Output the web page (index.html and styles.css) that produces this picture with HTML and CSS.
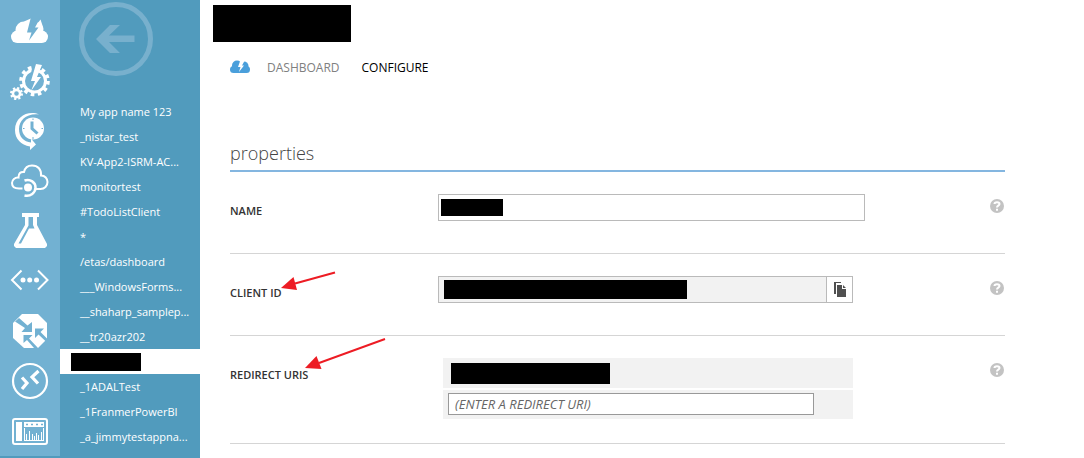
FILE: index.html
```html
<!DOCTYPE html>
<html lang="en">
<head>
<meta charset="utf-8">
<meta name="viewport" content="width=device-width, initial-scale=1">
<title>Configure</title>
<link rel="stylesheet" href="styles.css">
</head>
<body>
<div class="shell">
  <nav class="rail" aria-label="Services">
    <button class="rail-item" type="button" aria-label="Cloud services"><svg viewBox="0 0 60 50"><g class="w"><circle cx="17.200" cy="30.800" r="6.200"/><circle cx="24" cy="24" r="8.500"/><circle cx="36.500" cy="23" r="7"/><circle cx="41.800" cy="30.800" r="6.200"/><path d="M17 27h25v10H17zM24 15.500L32 12v12z"/></g><path class="b" d="M31 11L27 26.500h4.500L29 34.500 38.500 21.500H35L38 16l3-5z"/><path class="w" d="M40.500 13.500l2 6-5-2z"/></svg></button>
    <button class="rail-item" type="button" aria-label="Automation"><svg viewBox="0 0 60 50"><circle class="s" cx="34.500" cy="25" r="11" stroke-width="3"/><circle class="s" cx="34.500" cy="25" r="13.500" stroke-width="3.600" stroke-dasharray="3.600 3.469"/><path class="b" d="M33 8l-4 18h4l9-17z"/><path class="w" d="M36 8l-5 17h4l-4 10 10-14h-4l5-12z"/><circle class="s" cx="16.500" cy="37.500" r="3.600" stroke-width="2.600"/><circle class="s" cx="16.500" cy="37.500" r="5.500" stroke-width="2" stroke-dasharray="2.200 2.120"/></svg></button>
    <button class="rail-item" type="button" aria-label="Scheduler"><svg viewBox="0 0 60 50"><circle class="w" cx="33" cy="22.500" r="11"/><path class="sb" d="M32 15.500v7l5.500 5" stroke-width="3"/><path class="sb" d="M33 12.500v1.500M33 31v2M23 22.500h1.500M41.500 22.500H43" stroke-width="1"/><path class="w" d="M39 8.500C29 4 15 10 15 24c0 9 6 15 15 16.500V44l6-5.500-5-6v4C24 36 19 31 19 23c0-9 8-16 20-14.500z"/></svg></button>
    <button class="rail-item" type="button" aria-label="API management"><svg viewBox="0 0 60 50"><path class="s" d="M22.500 32.500H19c-5 0-7-2.500-7-5.500s3-6 6.500-5.500c0-4 2-6 5.500-5.500 1-4.500 4-6.500 8-6.500 6 0 9.500 4 9 10 4 0 6.500 3 6.500 6.500 0 4-3 7-7 7h-5" stroke-width="2"/><circle class="w" cx="28" cy="31.500" r="4"/><path class="s" d="M24.500 24.500c6-2 11 2 11 7s-5 9.500-11 8" stroke-width="2.500"/></svg></button>
    <button class="rail-item" type="button" aria-label="Machine learning"><svg viewBox="0 0 60 50"><path class="w" d="M22 7h17v4h-2v8l10 19v2l-2 2H16l-2-2v-2l11-19v-8h-3z"/><path class="b" d="M28.500 11h4.500v8l1.500 3.500h-5.500L21 37.500h-2.500l10-18z"/></svg></button>
    <button class="rail-item" type="button" aria-label="Virtual networks"><svg viewBox="0 0 60 50"><path class="s" d="M21.500 14.500L12 24l9.500 9.500M38 14.500l9.500 9.500-9.500 9.500" stroke-width="2"/><g class="w"><circle cx="23" cy="24" r="2.500"/><circle cx="29.700" cy="24" r="2.500"/><circle cx="36.500" cy="24" r="2.500"/></g></svg></button>
    <button class="rail-item" type="button" aria-label="Traffic manager"><svg viewBox="0 0 60 50"><path class="w" d="M22 8h16l9 9v16l-9 9H24l-11-10V17z"/><path class="b" d="M15 15.500l4-3.500 8.500 7.500 4.500-3.500V26H21.500l3.500-4zM23.500 29h9l-3.500 3.500 9 9.500h-4l-7-8-3.500 3zM35 22.500h9l-3.500 3.500 6.500 6.500v4L38.500 28.500 35 32z"/></svg></button>
    <button class="rail-item" type="button" aria-label="Remote app"><svg viewBox="0 0 60 50"><circle class="s" cx="30" cy="25" r="17" stroke-width="2.200"/><path class="s" d="M22 21.500l5 5.500-5 6M38.500 15L32 21l6 6.500" stroke-width="3.200"/></svg></button>
    <button class="rail-item" type="button" aria-label="Media services"><svg viewBox="0 0 60 50"><rect class="s" x="13" y="13" width="34" height="25" rx="2" stroke-width="2"/><path class="w" d="M16 16h6v19h-6zM24 16h20v5H24zM24 35V22h1v13zM26 35v-7h1v7zM29 35V25h1v10zM32 35v-7h1v7zM34 35v-5h1v5zM36 35v-8h1v8zM38 35v-6h1v6zM41 35v-9h1v9zM43 35V22h1v13zM24 34h20v1H24z"/><path class="sb" d="M26 18.500h2M31 18.500h2M36 18.500h2M41 18.500h2M27 17.500v2M32 17.500v2M37 17.500v2M42 17.500v2" stroke-width="1"/></svg></button>
  </nav>
  <nav class="apps" aria-label="Applications">
    <button class="back" type="button" aria-label="Back"><svg viewBox="0 0 74 74"><circle cx="37" cy="37" r="34.500"/><path d="M17 37l14-14h10L30 33.500h25.500v6.500H30L41 51H31z"/></svg></button>
    <ul class="app-list">
      <li><a href="#">My app name 123</a></li>
      <li><a href="#">_nistar_test</a></li>
      <li><a href="#">KV-App2-ISRM-AC...</a></li>
      <li><a href="#">monitortest</a></li>
      <li><a href="#">#TodoListClient</a></li>
      <li><a href="#">*</a></li>
      <li><a href="#">/etas/dashboard</a></li>
      <li><a href="#">___WindowsForms...</a></li>
      <li><a href="#">__shaharp_samplep...</a></li>
      <li><a href="#">__tr20azr202</a></li>
      <li><a class="selected" href="#" aria-label="Current application"><span class="redacted redacted-app"></span></a></li>
      <li><a href="#">_1ADALTest</a></li>
      <li><a href="#">_1FranmerPowerBI</a></li>
      <li><a href="#">_a_jimmytestappna...</a></li>
    </ul>
  </nav>
  <main class="main">
    <h1 class="title redacted" aria-label="Application name"></h1>
    <div class="content">
      <nav class="tabs" aria-label="Sections">
        <a href="#" aria-label="Quick start"><svg class="quick" viewBox="0 0 20 14"><g fill="#4a9fdb"><circle cx="3.500" cy="9.500" r="3.500"/><circle cx="7" cy="5.500" r="5"/><circle cx="14" cy="6" r="4.500"/><circle cx="16.500" cy="9.500" r="3.500"/><path d="M3.500 7h13v6h-13z"/></g><path fill="#fff" d="M10.500 0L8 7h2.500L9 12 14 5.500h-2L15 0z"/></svg></a>
        <a href="#">DASHBOARD</a>
        <a class="current" href="#">CONFIGURE</a>
      </nav>
      <h2 class="heading">properties</h2>
      <form>
        <div class="row">
          <label class="label" for="name">NAME</label>
          <div class="field field-name"><input class="box" id="name" type="text"><span class="redacted redacted-name"></span></div>
          <button class="help" type="button" aria-label="Help with name"><svg viewBox="0 0 14 14"><circle cx="7" cy="7" r="7"/><path d="M4.500 5C4.500 2.500 9.500 2.500 9.500 5c0 1.800-2.500 1.500-2.500 3.500M7 9.700v2"/></svg></button>
        </div>
        <div class="row">
          <label class="label" for="client">CLIENT ID</label>
          <div class="field field-client"><input class="box readonly" id="client" type="text" readonly><button class="copy" type="button" aria-label="Copy client ID"><svg viewBox="0 0 12 15"><path fill="#505050" d="M0 0h7v1H2v11H0zM3 3h5v4h4v8H3zM9 3l3 3H9z"/></svg></button><span class="redacted redacted-client"></span></div>
          <button class="help" type="button" aria-label="Help with client ID"><svg viewBox="0 0 14 14"><circle cx="7" cy="7" r="7"/><path d="M4.500 5C4.500 2.500 9.500 2.500 9.500 5c0 1.800-2.500 1.500-2.500 3.500M7 9.700v2"/></svg></button>
          <svg class="arrow arrow-client" viewBox="0 0 56 20" aria-hidden="true"><path d="M14 12.500L54 1.500" stroke="#ed1c24" stroke-width="2"/><path fill="#ed1c24" d="M0 17L12.500 6l3.500 13z"/></svg>
        </div>
        <div class="row row-last">
          <label class="label" for="uri">REDIRECT URIS</label>
          <div class="uris">
            <div class="uri"><span class="redacted redacted-uri"></span></div>
            <div class="uri-new"><input class="uri-input" id="uri" type="text" placeholder="(ENTER A REDIRECT URI)"></div>
          </div>
          <button class="help" type="button" aria-label="Help with redirect URIs"><svg viewBox="0 0 14 14"><circle cx="7" cy="7" r="7"/><path d="M4.500 5C4.500 2.500 9.500 2.500 9.500 5c0 1.800-2.500 1.500-2.500 3.500M7 9.700v2"/></svg></button>
          <svg class="arrow arrow-uri" viewBox="0 0 82 34" aria-hidden="true"><path d="M14 26L80 2" stroke="#ed1c24" stroke-width="2"/><path fill="#ed1c24" d="M0 31L11.500 19l5 13z"/></svg>
        </div>
      </form>
    </div>
  </main>
</div>
</body>
</html>
```
FILE: styles.css
```css
* { box-sizing: border-box; }
body {
  margin: 0;
  background: #fff;
  color: #333;
  font-family: "Open Sans", "Noto Sans", sans-serif;
  font-size: 11px;
}
button { padding: 0; border: 0; background: none; cursor: pointer; }
a { color: inherit; text-decoration: none; }
svg { display: block; }
.shell {
  display: flex;
  min-height: 100vh;
  background: linear-gradient(to right, #519bbd 60px, transparent 60px);
}

.rail {
  flex: 0 0 60px;
  align-self: flex-start;
  padding-top: 6px;
  background: #72b1d2;
}
.rail-item { display: block; width: 100%; height: 50px; }
.rail-item svg { width: 60px; height: 50px; }
.w { fill: #fff; }
.b { fill: #72b1d2; }
.s { fill: none; stroke: #fff; }
.sb { fill: none; stroke: #72b1d2; }

.apps { flex: 0 0 140px; background: #519bbd; }
.back { display: block; margin: 2px 0 23px 19px; }
.back svg { width: 74px; height: 74px; }
.back circle { fill: none; stroke: #78b0cd; stroke-width: 5; }
.back path { fill: #78b0cd; }
.app-list { margin: 0; padding: 0; list-style: none; }
.app-list a {
  display: block;
  height: 25px;
  padding-left: 20px;
  color: #fff;
  line-height: 25px;
  white-space: nowrap;
}
.app-list .selected { padding: 4px 0 0 11px; background: #fff; }

.redacted { display: block; background: #000; }
.redacted-app { width: 70px; height: 18px; }

.main { flex: 1; min-width: 0; padding: 5px 79px 0 13px; }
.title { width: 138px; height: 37px; margin: 0; }
.content { padding-left: 17px; }
.tabs {
  display: flex;
  align-items: center;
  height: 20px;
  margin-top: 15px;
  color: #808080;
  font-size: 12px;
}
.tabs a { margin-right: 22px; }
.tabs a:first-child { margin-right: 17px; }
.quick { width: 20px; height: 14px; }
.tabs .current { color: #000; }
.heading {
  height: 34px;
  margin: 61px 0 0;
  border-bottom: 2px solid #84b6e0;
  color: #444;
  font-size: 18px;
  font-weight: 300;
  line-height: 30px;
}
.row {
  position: relative;
  display: grid;
  grid-template-columns: 208px 1fr 15px;
  align-items: start;
  padding: 22px 0 32px;
  border-bottom: 1px solid #d5d5d5;
}
.row-last { padding-bottom: 24px; }
.label { padding-top: 8px; font-weight: 600; line-height: 18px; }
.field { position: relative; display: flex; width: 100%; }
.field-name { max-width: 427px; }
.field-client { max-width: 415px; }
.box {
  flex: 1;
  min-width: 0;
  height: 27px;
  padding: 0 8px;
  border: 1px solid #bababa;
  border-radius: 0;
  background: #fff;
  font: inherit;
}
.readonly { background: #f2f2f2; }
.copy {
  display: flex;
  align-items: center;
  justify-content: center;
  width: 26px;
  height: 27px;
  border: 1px solid #bababa;
  border-left: 0;
}
.copy svg { width: 12px; height: 15px; }
.redacted-name { position: absolute; top: 5px; left: 3px; width: 62px; height: 17px; }
.redacted-client { position: absolute; top: 4px; left: 6px; width: 243px; height: 19px; }
.help { margin-top: 5px; }
.help svg { width: 14px; height: 14px; }
.help circle { fill: #c3c3c3; }
.help path { fill: none; stroke: #fff; stroke-width: 2; }
.uris { display: grid; gap: 2px; max-width: 410px; width: 100%; margin-left: 5px; }
.uri { height: 30px; padding: 5px 8px; background: #f2f2f2; }
.redacted-uri { width: 159px; height: 21px; }
.uri-new { padding: 3px 5px 4px; background: #f2f2f2; }
.uri-input {
  display: block;
  width: 100%;
  max-width: 366px;
  height: 22px;
  padding: 0 6px;
  border: 1px solid #999;
  border-radius: 0;
  background: #fff;
  font: inherit;
  font-size: 13px;
  font-style: italic;
}
.uri-input::placeholder { color: #666; opacity: 1; }
.arrow { position: absolute; pointer-events: none; }
.arrow-client { top: 17px; left: 51px; width: 56px; height: 20px; }
.arrow-uri { top: 1px; left: 75px; width: 82px; height: 34px; }
```
